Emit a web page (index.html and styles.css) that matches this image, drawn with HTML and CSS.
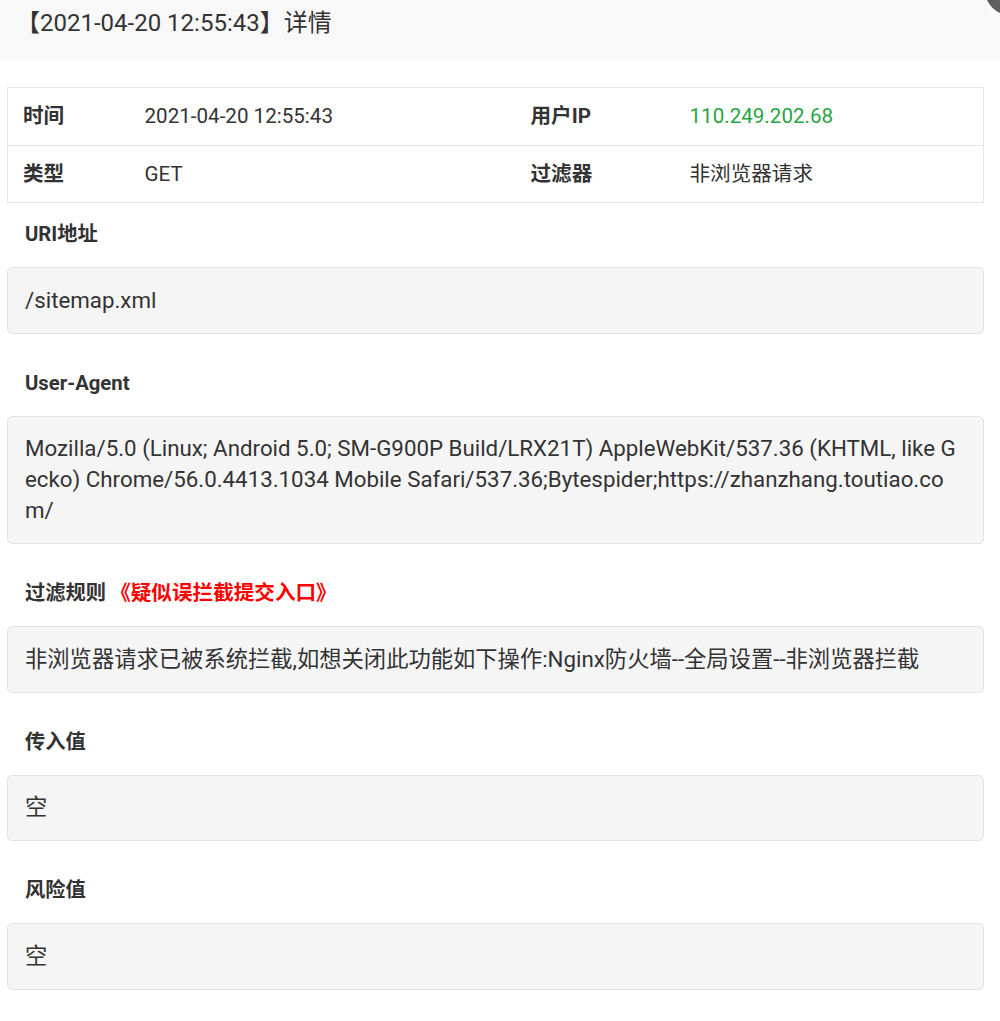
FILE: index.html
```html
<!DOCTYPE html>
<html>
<head>
    <meta charset="utf-8">
    <title>详情</title>
    <link rel="stylesheet" href="styles.css">
</head>
<body>
    <div class="header">
        【2021-04-20 12:55:43】详情
        <span class="close-btn"></span>
    </div>

    <div class="content">
        <table class="info-table">
            <colgroup>
                <col class="col-label">
                <col class="col-value">
                <col class="col-label2">
                <col class="col-value2">
            </colgroup>
            <tr>
                <th>时间</th>
                <td>2021-04-20 12:55:43</td>
                <th>用户IP</th>
                <td class="ip">110.249.202.68</td>
            </tr>
            <tr>
                <th>类型</th>
                <td>GET</td>
                <th>过滤器</th>
                <td>非浏览器请求</td>
            </tr>
        </table>

        <div class="section-title">URI地址</div>
        <div class="box">/sitemap.xml</div>

        <div class="section-title">User-Agent</div>
        <div class="box">Mozilla/5.0 (Linux; Android 5.0; SM-G900P Build/LRX21T) AppleWebKit/537.36 (KHTML, like Gecko) Chrome/56.0.4413.1034 Mobile Safari/537.36;Bytespider;https://zhanzhang.toutiao.com/</div>

        <div class="section-title">过滤规则 <a class="report-link" href="#">《疑似误拦截提交入口》</a></div>
        <div class="box">非浏览器请求已被系统拦截,如想关闭此功能如下操作:Nginx防火墙--全局设置--非浏览器拦截</div>

        <div class="section-title">传入值</div>
        <div class="box">空</div>

        <div class="section-title">风险值</div>
        <div class="box">空</div>
    </div>
</body>
</html>
```

FILE: styles.css
```css
body {
    margin: 0;
    padding: 0;
    font-family: Roboto, "Noto Sans CJK SC", sans-serif;
    color: #333;
    background: #fff;
    overflow: hidden;
}

.header {
    position: relative;
    height: 60px;
    box-sizing: border-box;
    padding: 0 0 14px 16px;
    line-height: 46px;
    font-size: 24px;
    color: #333;
    background: #f8f8f8;
}

/* close button of the dialog, mostly outside the window */
.close-btn {
    position: absolute;
    left: 982px;
    top: -38px;
    width: 50px;
    height: 50px;
    border-radius: 50%;
    background: #5f5f5f;
    border: 3px solid #fff;
}

.content {
    padding: 27px 16px 0 7px;
}

.info-table {
    width: 100%;
    border-collapse: collapse;
    border: 1px solid #e6e6e6;
    font-size: 20.6px;
}

.col-label { width: 122px; }
.col-value { width: 386px; }
.col-label2 { width: 159px; }

.info-table th,
.info-table td {
    padding: 14px 15px;
    line-height: 28.5px;
    text-align: left;
    border-bottom: 1px solid #e6e6e6;
}

.info-table th {
    font-weight: bold;
    color: #333;
}

.info-table td {
    color: #333;
}

.info-table .ip {
    color: #27a543;
}

.section-title {
    padding: 14px 18px 16px;
    line-height: 34px;
    font-size: 20.3px;
    font-weight: bold;
    color: #333;
}

.report-link {
    margin-left: -1px;
    font-size: 20.6px;
    color: #ff0000;
    text-decoration: none;
}

.box {
    padding: 16.75px 17px;
    margin-bottom: 18px;
    line-height: 31px;
    font-size: 22.3px;
    color: #333;
    background: #f5f5f5;
    border: 1px solid #e2e2e2;
    border-radius: 5px;
    word-break: break-all;
}
```
